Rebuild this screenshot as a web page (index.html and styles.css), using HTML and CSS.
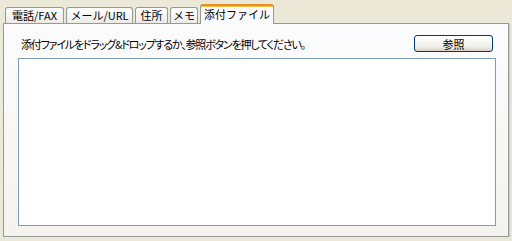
FILE: index.html
```html
<!DOCTYPE html>
<html>
  <head>
    <title>添付ファイル</title>
    <link rel="stylesheet" href="styles.css">
  </head>
  <body>
    <div class="window">
      <!-- Tab strip -->
      <div class="tab-strip">
        <div class="tab tab-phone">電話/FAX</div>
        <div class="tab tab-mail">メール/URL</div>
        <div class="tab tab-addr">住所</div>
        <div class="tab tab-memo">メモ</div>
        <div class="tab tab-file active">添付ファイル</div>
      </div>

      <div class="panel">
        <div class="toolbar">
          <span class="hint">添付ファイルをドラッグ&amp;ドロップするか、参照ボタンを押してください。</span>
          <button type="button" class="browse">参照</button>
        </div>
        <div class="drop-area"></div>
      </div>
    </div>
  </body>
</html>
```

FILE: styles.css
```css
body {
  margin: 0;
  background-color: #ece9d8;
  font-family: "Noto Sans CJK JP", "Liberation Sans", sans-serif;
  font-size: 11px;
  color: #000;
}

.window {
  padding: 4px 3px 0 3px;
}

.tab-strip {
  display: flex;
  align-items: flex-start;
  gap: 2px;
  height: 20px;
  padding-left: 2px;
  margin-bottom: -1px;
  position: relative;
  z-index: 1;
}

.tab {
  box-sizing: border-box;
  height: 16px;
  margin-top: 3px;
  border: 1px solid #919b9c;
  border-bottom: none;
  border-radius: 3px 3px 0 0;
  background: linear-gradient(#ffffff, #ecebe6);
  text-align: center;
  line-height: 15px;
  white-space: nowrap;
}

.tab-phone {
  width: 59px;
}

.tab-mail {
  width: 67px;
}

.tab-addr {
  width: 33px;
}

.tab-memo {
  width: 28px;
}

.tab.active {
  width: 74px;
  height: 20px;
  margin-top: 0;
  border-top: 2px solid #e68b2c;
  box-shadow: inset 0 1px 0 #ffc73c;
  background: #fcfcfe;
  line-height: 17px;
}

.panel {
  box-sizing: border-box;
  height: 214px;
  border: 1px solid #919b9c;
  background: linear-gradient(#fcfcfe, #f4f3ee);
  box-shadow: 1px 1px 0 #d0cebf, 2px 2px 0 #e3e0d0;
  padding: 11px 12px 0 14px;
}

.toolbar {
  display: flex;
  justify-content: space-between;
  align-items: center;
  height: 17px;
  padding-left: 3px;
  padding-right: 3px;
  margin-bottom: 6px;
}

.hint {
  font-feature-settings: "palt";
  letter-spacing: -1.2px;
}

.browse {
  box-sizing: border-box;
  width: 79px;
  height: 17px;
  padding: 0;
  border: 1px solid #003c74;
  border-radius: 3px;
  background: linear-gradient(#ffffff, #f0f0ea 70%, #d6d0c5);
  font-family: inherit;
  font-size: 11px;
  line-height: 14px;
  color: #000;
}

.drop-area {
  box-sizing: border-box;
  height: 168px;
  border: 1px solid #7f9db9;
  background-color: #ffffff;
}
```
